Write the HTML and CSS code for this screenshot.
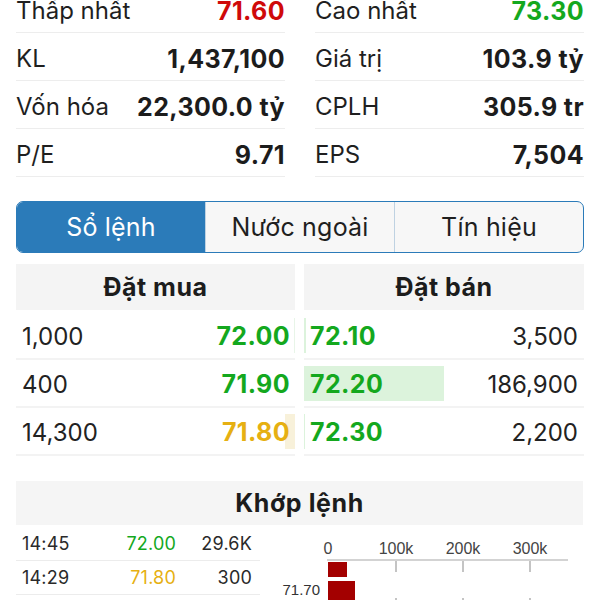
FILE: index.html
```html
<!DOCTYPE html>
<html lang="vi">
<head>
<meta charset="utf-8">
<title>Sổ lệnh</title>
<link rel="stylesheet" href="styles.css">
</head>
<body>
<div class="page">
  <section class="stats">
    <div class="stat"><span class="label">Thấp nhất</span><span class="value red">71.60</span></div>
    <div class="stat"><span class="label">Cao nhất</span><span class="value green">73.30</span></div>
    <div class="stat"><span class="label">KL</span><span class="value">1,437,100</span></div>
    <div class="stat"><span class="label">Giá trị</span><span class="value">103.9 tỷ</span></div>
    <div class="stat"><span class="label">Vốn hóa</span><span class="value">22,300.0 tỷ</span></div>
    <div class="stat"><span class="label">CPLH</span><span class="value">305.9 tr</span></div>
    <div class="stat"><span class="label">P/E</span><span class="value">9.71</span></div>
    <div class="stat"><span class="label">EPS</span><span class="value">7,504</span></div>
  </section>

  <nav class="segmented">
    <div class="seg active">Sổ lệnh</div>
    <div class="seg">Nước ngoài</div>
    <div class="seg">Tín hiệu</div>
  </nav>

  <section class="book">
    <div class="side buy">
      <div class="side-head">Đặt mua</div>
      <div class="order"><span class="bar bar-buy" style="width:1px"></span><span class="qty">1,000</span><span class="price green">72.00</span></div>
      <div class="order"><span class="qty">400</span><span class="price green">71.90</span></div>
      <div class="order"><span class="bar bar-ref" style="width:10px"></span><span class="qty">14,300</span><span class="price yellow">71.80</span></div>
    </div>
    <div class="side sell">
      <div class="side-head">Đặt bán</div>
      <div class="order"><span class="bar bar-sell" style="width:2px"></span><span class="price green">72.10</span><span class="qty">3,500</span></div>
      <div class="order"><span class="bar bar-sell" style="width:140px"></span><span class="price green">72.20</span><span class="qty">186,900</span></div>
      <div class="order"><span class="bar bar-sell" style="width:1px"></span><span class="price green">72.30</span><span class="qty">2,200</span></div>
    </div>
  </section>

  <section class="match">
    <div class="match-head">Khớp lệnh</div>
    <div class="match-body">
      <div class="trades">
        <div class="trade"><span class="t-time">14:45</span><span class="t-price green">72.00</span><span class="t-vol">29.6K</span></div>
        <div class="trade"><span class="t-time">14:29</span><span class="t-price yellow">71.80</span><span class="t-vol">300</span></div>
      </div>
      <svg class="chart" width="324" height="80" viewBox="0 0 324 80">
        <g class="axis-labels">
          <text x="68" y="27" text-anchor="middle">0</text>
          <text x="136" y="27" text-anchor="middle">100k</text>
          <text x="203" y="27" text-anchor="middle">200k</text>
          <text x="270" y="27" text-anchor="middle">300k</text>
        </g>
        <line x1="67" y1="33" x2="308" y2="33" stroke="#c4c4c4" stroke-width="1.5"/>
        <line x1="136" y1="34" x2="136" y2="80" stroke="#c4c4c4" stroke-width="2" stroke-dasharray="11 26"/>
        <line x1="203" y1="34" x2="203" y2="80" stroke="#c4c4c4" stroke-width="2" stroke-dasharray="11 26"/>
        <line x1="270" y1="34" x2="270" y2="80" stroke="#c4c4c4" stroke-width="2" stroke-dasharray="11 26"/>
        <rect x="68" y="35" width="19" height="15" fill="#a30000"/>
        <rect x="68" y="54" width="27" height="19" fill="#a30000"/>
        <text class="bar-label" x="60" y="68" text-anchor="end">71.70</text>
      </svg>
    </div>
  </section>
</div>
</body>
</html>
```
FILE: styles.css
```css
* { box-sizing: border-box; }

html, body {
  margin: 0;
  padding: 0;
  background: #ffffff;
  overflow: hidden;
}

body {
  font-family: Inter, "Liberation Sans", Arial, sans-serif;
  color: #1c1c1c;
}

.page {
  padding: 0 16px;
  margin-top: -15px;
}

.green { color: #14a81e; }
.red { color: #cf0a0a; }
.yellow { color: #e6b012; }

/* stats */
.stats {
  display: grid;
  grid-template-columns: 1fr 1fr;
  column-gap: 30px;
}

.stat {
  height: 48px;
  display: flex;
  align-items: center;
  justify-content: space-between;
  border-bottom: 1px solid #ededed;
  font-size: 24px;
  padding-top: 4px;
}

.label {
  font-weight: 400;
  color: #1f1f1f;
}

.value {
  font-weight: 700;
  font-size: 25px;
  letter-spacing: 0.4px;
}

/* segmented */
.segmented {
  margin-top: 24px;
  height: 52px;
  display: flex;
  border: 1px solid #2b7bb9;
  border-radius: 7px;
  overflow: hidden;
  background: #f7f7f7;
}

.seg {
  flex: 1;
  display: flex;
  align-items: center;
  justify-content: center;
  font-size: 25px;
  letter-spacing: 0.2px;
  color: #1f1f1f;
  border-left: 1px solid #bfd2e2;
}

.seg:first-child { border-left: none; }

.seg.active {
  background: #2b7bb9;
  color: #ffffff;
}

/* order book */
.book {
  margin-top: 11px;
  display: grid;
  grid-template-columns: 279px 1fr;
  column-gap: 9px;
}

.side-head {
  height: 46px;
  background: #f4f4f4;
  display: flex;
  align-items: center;
  justify-content: center;
  font-size: 25px;
  letter-spacing: 0.5px;
  font-weight: 700;
  margin-bottom: 2px;
}

.order {
  position: relative;
  height: 48px;
  display: flex;
  align-items: center;
  justify-content: space-between;
  border-bottom: 2px solid #f3f3f3;
  font-size: 24px;
  padding: 2px 6px 0 6px;
}

.buy .order { padding-right: 5px; }

.qty {
  position: relative;
  font-weight: 400;
  color: #222;
}

.price {
  position: relative;
  font-weight: 700;
  font-size: 25px;
  letter-spacing: 0.4px;
}

.bar {
  position: absolute;
  top: 6px;
  bottom: 5px;
}

.buy .bar { right: 0; }
.sell .bar { left: 0; }

.bar-sell { background: #dcf3dc; }
.bar-buy { background: #e8f5e8; }
.bar-ref { background: #f8f1da; }

/* match */
.match {
  margin-top: 25px;
}

.match-head {
  height: 44px;
  background: #f5f5f5;
  display: flex;
  align-items: center;
  justify-content: center;
  font-size: 25px;
  letter-spacing: 0.6px;
  font-weight: 700;
  margin-right: 1px;
}

.match-body {
  display: flex;
  align-items: flex-start;
  margin-top: 2px;
}

.trades {
  width: 244px;
  flex: none;
}

.trade {
  height: 34px;
  display: grid;
  grid-template-columns: 84px 70px 76px;
  align-items: center;
  padding: 0 8px 0 6px;
  font-size: 18px;
  letter-spacing: 0.2px;
  border-bottom: 1px solid #ececec;
  color: #2a2a2a;
}

.t-price, .t-vol { text-align: right; }

.chart {
  display: block;
  flex: none;
}

.axis-labels text {
  font-family: "Liberation Sans", Arial, sans-serif;
  font-size: 16px;
  fill: #444;
}

.bar-label {
  font-family: "Liberation Sans", Arial, sans-serif;
  font-size: 15px;
  fill: #333;
}
```
